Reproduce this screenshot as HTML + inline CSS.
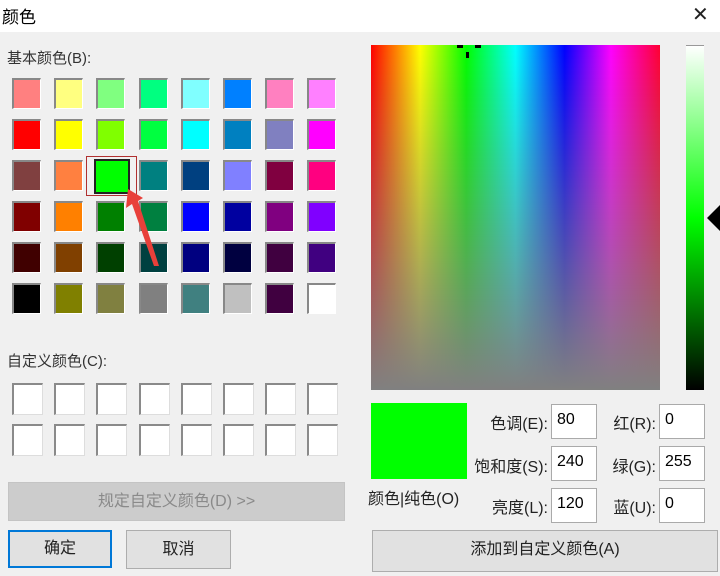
<!DOCTYPE html>
<html><head><meta charset="utf-8"><style>
*{margin:0;padding:0;box-sizing:border-box}
body{width:720px;height:576px;overflow:hidden;background:#f0f0f0;font-family:"Liberation Sans","Noto Sans CJK SC",sans-serif;color:#000;position:relative;font-size:14px}
.a{position:absolute}
.title{left:0;top:0;width:720px;height:32px;background:#fff}
.sw{position:absolute;width:29px;height:31px;border-top:2px solid #888;border-left:2px solid #888;border-right:1px solid #fff;border-bottom:1px solid #fff}
.cu{position:absolute;width:31px;height:32px;background:#fff;border-top:2px solid #8a8a8a;border-left:2px solid #8a8a8a;border-right:1px solid #ddd;border-bottom:1px solid #ddd}
.inp{position:absolute;width:46px;height:35px;background:#fff;border:1px solid #aaa;font-size:16px;padding:6px 0 0 5px}
.lb{position:absolute;font-size:16px;text-align:right;color:#222}
.btn{position:absolute;background:#e1e1e1;border:1px solid #adadad;font-size:16px;text-align:center;color:#222}
</style></head><body>
<div class="a title"></div>
<div class="a" style="left:2px;top:3px;font-size:17px">颜色</div>
<div class="a" style="left:692px;top:2px;font-size:20px;color:#222">✕</div>
<div class="a" style="left:7px;top:47px;font-size:15px;color:#333">基本颜色(B):</div>
<div id="g"></div>
<div class="a" style="left:86px;top:156px;width:51px;height:40px;border:1px solid #b03030"></div>
<div class="a" style="left:94px;top:159px;width:36px;height:35px;border:2px solid #222;background:#00ff00"></div>
<svg class="a" style="left:0;top:0" width="720" height="576"><polygon points="128,189 143,198 138,201 159,266 154,266 132,204 126,208" fill="#e8403a"/></svg>
<div class="a" style="left:7px;top:350px;font-size:15px;color:#333">自定义颜色(C):</div>
<div id="c"></div>
<div class="btn" style="left:8px;top:482px;width:337px;height:39px;background:#cccccc;border-color:#c4c4c4;color:#8a8a8a;line-height:37px">规定自定义颜色(D) &gt;&gt;</div>
<div class="btn" style="left:8px;top:530px;width:104px;height:38px;border:2px solid #0078d7;line-height:34px">确定</div>
<div class="btn" style="left:126px;top:530px;width:105px;height:39px;line-height:37px">取消</div>
<div class="a" style="left:371px;top:45px;width:289px;height:345px;background:linear-gradient(to bottom,rgba(128,128,128,0),#808080),linear-gradient(to right,#f00,#ff0 17%,#0f0 33%,#0ff 50%,#00f 67%,#f0f 83%,#f03)"></div>
<div class="a" style="left:457px;top:45px;width:6px;height:3px;background:#000"></div>
<div class="a" style="left:475px;top:45px;width:6px;height:3px;background:#000"></div>
<div class="a" style="left:466px;top:52px;width:3px;height:6px;background:#000"></div>
<div class="a" style="left:686px;top:45px;width:18px;height:345px;background:linear-gradient(to bottom,#fff,#0f0 50%,#000);border-top:1px solid #999"></div>
<svg class="a" style="left:705px;top:205px" width="15" height="26"><polygon points="2,13 15,0 15,26" fill="#000"/></svg>
<div class="a" style="left:371px;top:403px;width:96px;height:76px;background:#00ff00"></div>
<div class="a" style="left:368px;top:485px;font-size:16px;color:#222">颜色|纯色(O)</div>
<div class="lb" style="left:460px;top:410px;width:88px">色调(E):</div>
<div class="lb" style="left:460px;top:453px;width:88px">饱和度(S):</div>
<div class="lb" style="left:460px;top:494px;width:88px">亮度(L):</div>
<div class="inp" style="left:551px;top:404px">80</div>
<div class="inp" style="left:551px;top:446px">240</div>
<div class="inp" style="left:551px;top:488px">120</div>
<div class="lb" style="left:596px;top:410px;width:60px">红(R):</div>
<div class="lb" style="left:596px;top:453px;width:60px">绿(G):</div>
<div class="lb" style="left:596px;top:494px;width:60px">蓝(U):</div>
<div class="inp" style="left:659px;top:404px">0</div>
<div class="inp" style="left:659px;top:446px">255</div>
<div class="inp" style="left:659px;top:488px">0</div>
<div class="btn" style="left:372px;top:530px;width:346px;height:42px;line-height:38px">添加到自定义颜色(A)</div>
<script>
var cols=[["#FF8080","#FFFF80","#80FF80","#00FF80","#80FFFF","#0080FF","#FF80C0","#FF80FF"],
["#FF0000","#FFFF00","#80FF00","#00FF40","#00FFFF","#0080C0","#8080C0","#FF00FF"],
["#804040","#FF8040","#00FF00","#008080","#004080","#8080FF","#800040","#FF0080"],
["#800000","#FF8000","#008000","#008040","#0000FF","#0000A0","#800080","#8000FF"],
["#400000","#804000","#004000","#004040","#000080","#000040","#400040","#400080"],
["#000000","#808000","#808040","#808080","#408080","#C0C0C0","#400040","#FFFFFF"]];
var h="";
for(var r=0;r<6;r++)for(var c=0;c<8;c++){if(r==2&&c==2)continue;h+='<div class="sw" style="left:'+(12+c*42.2)+'px;top:'+(78+r*41)+'px;background:'+cols[r][c]+'"></div>';}
document.getElementById("g").innerHTML=h;
h="";
for(var r=0;r<2;r++)for(var c=0;c<8;c++)h+='<div class="cu" style="left:'+(12+c*42.2)+'px;top:'+(383+r*41)+'px"></div>';
document.getElementById("c").innerHTML=h;
</script>
</body></html>
